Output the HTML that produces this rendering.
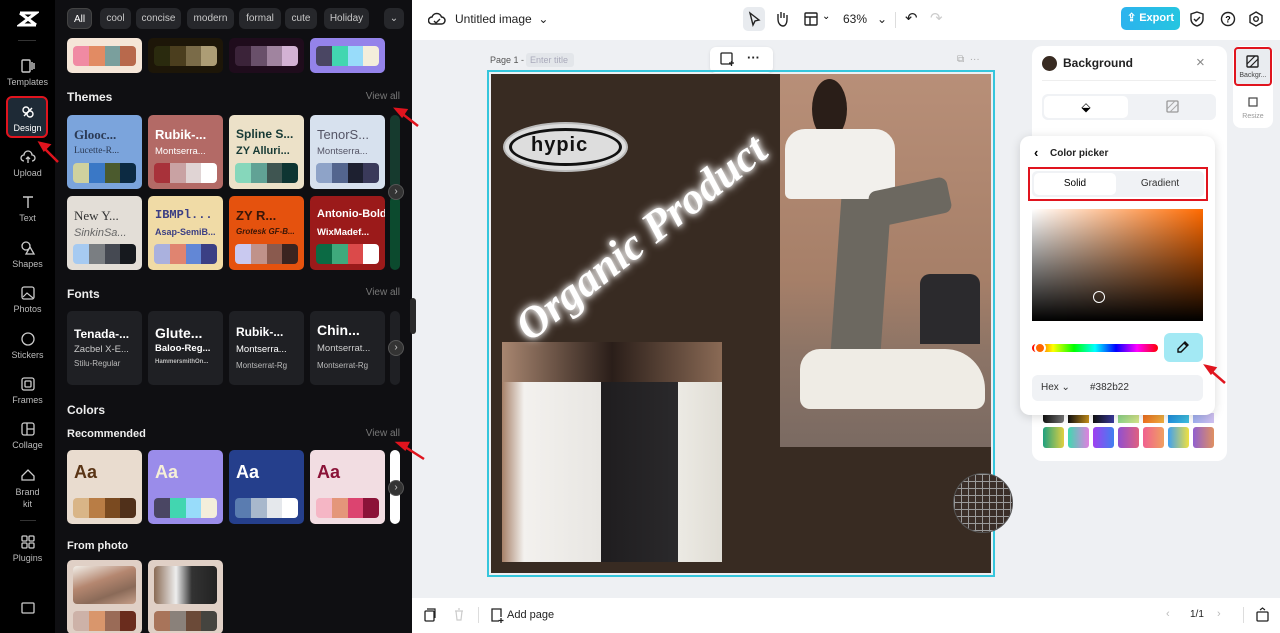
<!DOCTYPE html>
<html><head><meta charset="utf-8"><style>
*{box-sizing:border-box;margin:0;padding:0}
body{width:1280px;height:633px;overflow:hidden;font-family:"Liberation Sans",sans-serif;background:#eef0f3;position:relative}
.a{position:absolute}
.rail{left:0;top:0;width:55px;height:633px;background:#000}
.ri{position:absolute;left:0;width:55px;text-align:center;color:#bbb;font-size:9px}
.ri svg{display:block;margin:0 auto 3px}
.panel{left:55px;top:0;width:357px;height:633px;background:#0f0f12;color:#fff;overflow:hidden}
.chip{position:absolute;top:8px;height:21px;border-radius:6px;background:#26272b;color:#c8c8c8;font-size:10px;line-height:21px;text-align:center}
.h{position:absolute;font-size:12px;font-weight:bold;color:#eee}
.va{position:absolute;right:12px;font-size:10px;color:#777}
.card{position:absolute;width:75px;height:74px;border-radius:5px;overflow:hidden}
.sw{position:absolute;left:6px;right:6px;bottom:6px;height:20px;border-radius:4px;overflow:hidden;display:flex}
.sw i{flex:1}
.t1{position:absolute;left:7px;top:12px;font-size:13px;font-weight:bold;white-space:nowrap}
.t2{position:absolute;left:7px;top:31px;font-size:9.5px;white-space:nowrap}
.t3{position:absolute;left:7px;top:46px;font-size:8px;white-space:nowrap;color:#bbb}
.arr{position:absolute;width:16px;height:16px;border-radius:50%;background:#333;border:1px solid #555;color:#ccc;font-size:10px;line-height:14px;text-align:center}
.top{left:412px;top:0;width:868px;height:40px;background:#fff}
.bot{left:412px;top:598px;width:868px;height:35px;background:#fff}
.red{position:absolute;border:2px solid #e0141e}
</style></head><body>
<div class="a rail">
 <div class="ri" style="top:10px"><svg width="22" height="18" viewBox="0 0 22 18"><path d="M3 3h16L3 15h16M3 3l16 12" stroke="#fff" stroke-width="3" fill="none"/></svg></div>
 <div style="position:absolute;left:18px;top:40px;width:18px;height:1px;background:#333"></div>
 <div class="ri" style="top:58px"><svg width="16" height="16"><rect x="2" y="2" width="8" height="12" rx="1" fill="none" stroke="#ccc" stroke-width="1.4"/><path d="M12 4v8M14 5v6" stroke="#ccc" stroke-width="1.4"/></svg>Templates</div>
 <div style="position:absolute;left:6px;top:96px;width:42px;height:42px;border-radius:6px;background:#1e2a36;border:2px solid #e0141e"></div>
 <div class="ri" style="top:104px;color:#fff"><svg width="16" height="16"><circle cx="6" cy="6" r="3" fill="none" stroke="#fff" stroke-width="1.4"/><circle cx="10" cy="10" r="3" fill="none" stroke="#fff" stroke-width="1.4"/><path d="M4 12l8-8" stroke="#fff" stroke-width="1.4"/></svg>Design</div>
 <div class="ri" style="top:149px"><svg width="16" height="16"><path d="M4 12a3 3 0 010-6 4 4 0 018 0 3 3 0 010 6M8 8v6M6 10l2-2 2 2" fill="none" stroke="#ccc" stroke-width="1.3"/></svg>Upload</div>
 <div class="ri" style="top:194px"><svg width="16" height="16"><path d="M3 3h10M8 3v11" stroke="#ccc" stroke-width="1.4"/></svg>Text</div>
 <div class="ri" style="top:240px"><svg width="16" height="16"><circle cx="6" cy="6" r="4" fill="none" stroke="#ccc" stroke-width="1.3"/><path d="M10 7l4 7H6z" fill="none" stroke="#ccc" stroke-width="1.3"/></svg>Shapes</div>
 <div class="ri" style="top:285px"><svg width="16" height="16"><rect x="2" y="2" width="12" height="12" rx="2" fill="none" stroke="#ccc" stroke-width="1.3"/><path d="M3 12l4-4 6 5" fill="none" stroke="#ccc" stroke-width="1.2"/></svg>Photos</div>
 <div class="ri" style="top:331px"><svg width="16" height="16"><circle cx="8" cy="8" r="6" fill="none" stroke="#ccc" stroke-width="1.3"/></svg>Stickers</div>
 <div class="ri" style="top:376px"><svg width="16" height="16"><rect x="2" y="2" width="12" height="12" rx="2" fill="none" stroke="#ccc" stroke-width="1.3"/><rect x="5" y="5" width="6" height="6" rx="1" fill="none" stroke="#ccc" stroke-width="1.3"/></svg>Frames</div>
 <div class="ri" style="top:421px"><svg width="16" height="16"><rect x="2" y="2" width="12" height="12" rx="2" fill="none" stroke="#ccc" stroke-width="1.3"/><path d="M7 2v12M7 8h7" stroke="#ccc" stroke-width="1.3"/></svg>Collage</div>
 <div class="ri" style="top:467px;line-height:12px"><svg width="16" height="16"><path d="M2 13h12V9L8 3 2 9z" fill="none" stroke="#ccc" stroke-width="1.3"/></svg>Brand<br>kit</div>
 <div style="position:absolute;left:20px;top:520px;width:16px;height:1px;background:#333"></div>
 <div class="ri" style="top:534px"><svg width="16" height="16"><rect x="2" y="2" width="5" height="5" rx="1" fill="none" stroke="#ccc" stroke-width="1.3"/><rect x="9" y="2" width="5" height="5" rx="1" fill="none" stroke="#ccc" stroke-width="1.3"/><rect x="2" y="9" width="5" height="5" rx="1" fill="none" stroke="#ccc" stroke-width="1.3"/><rect x="9" y="9" width="5" height="5" rx="1" fill="none" stroke="#ccc" stroke-width="1.3"/></svg>Plugins</div>
 <div class="ri" style="top:601px"><svg width="16" height="14"><rect x="2" y="2" width="12" height="10" rx="1" fill="none" stroke="#ccc" stroke-width="1.3"/></svg></div>
</div>
<div class="a panel">
 <div class="chip" style="left:12px;width:25px;background:#2e2f33;border:1px solid #444;color:#fff">All</div>
 <div class="chip" style="left:45px;width:31px">cool</div>
 <div class="chip" style="left:81px;width:45px">concise</div>
 <div class="chip" style="left:132px;width:47px">modern</div>
 <div class="chip" style="left:184px;width:42px">formal</div>
 <div class="chip" style="left:230px;width:32px">cute</div>
 <div class="chip" style="left:269px;width:45px">Holiday</div>
 <div class="chip" style="left:329px;width:20px">⌄</div>
 <div class="card" style="left:12px;top:38px;height:35px;background:#f5e6d8"><div class="sw" style="top:8px;height:20px"><i style="background:#f08aa3"></i><i style="background:#e28b63"></i><i style="background:#7a9f9d"></i><i style="background:#b8694c"></i></div></div>
 <div class="card" style="left:93px;top:38px;height:35px;background:#1d1608"><div class="sw" style="top:8px;height:20px"><i style="background:#2a2a0e"></i><i style="background:#4b3e1e"></i><i style="background:#7a6b48"></i><i style="background:#ad9d75"></i></div></div>
 <div class="card" style="left:174px;top:38px;height:35px;background:#1f0c1c"><div class="sw" style="top:8px;height:20px"><i style="background:#3b2339"></i><i style="background:#69506a"></i><i style="background:#a0849f"></i><i style="background:#d3b2d4"></i></div></div>
 <div class="card" style="left:255px;top:38px;height:35px;background:#9483ea"><div class="sw" style="top:8px;height:20px"><i style="background:#4a4663"></i><i style="background:#42d6b0"></i><i style="background:#98dcfa"></i><i style="background:#f4eedb"></i></div></div>
 <div class="h" style="left:12px;top:90px">Themes</div><div class="va" style="top:91px">View all</div>
 <div class="card" style="left:12px;top:115px;background:#7ba4dc;color:#2b3a55"><div class="t1" style="font-family:'Liberation Serif',serif">Glooc...</div><div class="t2" style="font-family:'Liberation Serif',serif">Lucette-R...</div><div class="sw"><i style="background:#cfd19e"></i><i style="background:#3a78c6"></i><i style="background:#4b5a2d"></i><i style="background:#0c2a42"></i></div></div>
 <div class="card" style="left:93px;top:115px;background:#b36a66;color:#fff"><div class="t1">Rubik-...</div><div class="t2">Montserra...</div><div class="sw"><i style="background:#a8323a"></i><i style="background:#c9a2a3"></i><i style="background:#e0d4d4"></i><i style="background:#fff"></i></div></div>
 <div class="card" style="left:174px;top:115px;background:#ece1c8;color:#173a35"><div class="t1" style="font-size:12px">Spline S...</div><div class="t2" style="font-size:11px;font-weight:bold;top:30px">ZY Alluri...</div><div class="sw"><i style="background:#86d7bb"></i><i style="background:#61a295"></i><i style="background:#3f5551"></i><i style="background:#0e3532"></i></div></div>
 <div class="card" style="left:255px;top:115px;background:#d7e1ee;color:#556"><div class="t1" style="font-weight:normal">TenorS...</div><div class="t2">Montserra...</div><div class="sw"><i style="background:#8ea3c8"></i><i style="background:#53658e"></i><i style="background:#1d2030"></i><i style="background:#3a3a5a"></i></div></div>
 <div class="card" style="left:335px;top:115px;width:10px;background:#163a2e"></div>
 <div class="card" style="left:12px;top:196px;background:#e3ded7;color:#333"><div class="t1" style="font-family:'Liberation Serif',serif;font-weight:normal">New Y...</div><div class="t2" style="font-style:italic;font-size:11px;color:#666">SinkinSa...</div><div class="sw"><i style="background:#a6caf1"></i><i style="background:#7a7e82"></i><i style="background:#454952"></i><i style="background:#16191e"></i></div></div>
 <div class="card" style="left:93px;top:196px;background:#f0dba6;color:#3b3f84"><div class="t1" style="font-family:'Liberation Mono',monospace;font-size:12px">IBMPl...</div><div class="t2" style="font-weight:bold;font-size:9px">Asap-SemiB...</div><div class="sw"><i style="background:#aab1de"></i><i style="background:#e08470"></i><i style="background:#6287d6"></i><i style="background:#3b3f84"></i></div></div>
 <div class="card" style="left:174px;top:196px;background:#e5520e;color:#3a1608"><div class="t1">ZY R...</div><div class="t2" style="font-style:italic;font-weight:bold;font-size:8px">Grotesk GF-B...</div><div class="sw"><i style="background:#c9c9f0"></i><i style="background:#c0928a"></i><i style="background:#8a5a4e"></i><i style="background:#3a2420"></i></div></div>
 <div class="card" style="left:255px;top:196px;background:#9b1a1a;color:#fff"><div class="t1" style="font-size:11px">Antonio-Bold</div><div class="t2" style="font-weight:bold">WixMadef...</div><div class="sw"><i style="background:#0b6a44"></i><i style="background:#3fa97c"></i><i style="background:#db4a4a"></i><i style="background:#fff"></i></div></div>
 <div class="card" style="left:335px;top:196px;width:10px;background:#0c4a2e"></div>
 <div class="arr" style="left:333px;top:184px">›</div>
 <div class="h" style="left:12px;top:287px">Fonts</div><div class="va" style="top:287px">View all</div>
 <div class="card" style="left:12px;top:311px;background:#1f2024"><div class="t1" style="top:16px;font-size:12px">Tenada-...</div><div class="t2" style="top:33px;color:#ccc">Zacbel X-E...</div><div class="t3" style="top:48px">Stilu-Regular</div></div>
 <div class="card" style="left:93px;top:311px;background:#1f2024"><div class="t1" style="top:14px;font-size:14px">Glute...</div><div class="t2" style="top:32px;font-weight:bold">Baloo-Reg...</div><div class="t3" style="top:48px;font-size:6px;font-weight:bold">HammersmithOn...</div></div>
 <div class="card" style="left:174px;top:311px;background:#1f2024"><div class="t1" style="top:14px;font-size:12px">Rubik-...</div><div class="t2" style="top:33px">Montserra...</div><div class="t3" style="top:50px">Montserrat-Rg</div></div>
 <div class="card" style="left:255px;top:311px;background:#1f2024"><div class="t1" style="top:11px;font-size:14px">Chin...</div><div class="t2" style="top:32px;color:#ccc">Montserrat...</div><div class="t3" style="top:50px">Montserrat-Rg</div></div>
 <div class="card" style="left:335px;top:311px;width:10px;background:#1f2024"></div>
 <div class="arr" style="left:333px;top:340px">›</div>
 <div class="h" style="left:12px;top:403px">Colors</div>
 <div class="h" style="left:12px;top:428px;font-size:11px">Recommended</div><div class="va" style="top:428px">View all</div>
 <div class="card" style="left:12px;top:450px;background:#e9dccf;color:#5a3516"><div class="t1" style="font-size:18px;top:12px">Aa</div><div class="sw"><i style="background:#d9b587"></i><i style="background:#b97d45"></i><i style="background:#7a4a20"></i><i style="background:#50301a"></i></div></div>
 <div class="card" style="left:93px;top:450px;background:#9a8cea;color:#f6f0d8"><div class="t1" style="font-size:18px;top:12px">Aa</div><div class="sw"><i style="background:#4a4663"></i><i style="background:#42d6b0"></i><i style="background:#98dcfa"></i><i style="background:#f4eedb"></i></div></div>
 <div class="card" style="left:174px;top:450px;background:#253f8c;color:#fff"><div class="t1" style="font-size:18px;top:12px">Aa</div><div class="sw"><i style="background:#5a7cb0"></i><i style="background:#a8b8cc"></i><i style="background:#e5e8ec"></i><i style="background:#fff"></i></div></div>
 <div class="card" style="left:255px;top:450px;background:#f2dde2;color:#8b1338"><div class="t1" style="font-size:18px;top:12px">Aa</div><div class="sw"><i style="background:#f5b6c5"></i><i style="background:#e4967a"></i><i style="background:#dc4470"></i><i style="background:#8b1338"></i></div></div>
 <div class="card" style="left:335px;top:450px;width:10px;background:#fff"></div>
 <div class="arr" style="left:333px;top:480px">›</div>
 <div class="h" style="left:12px;top:540px;font-size:11px">From photo</div>
 <div class="card" style="left:12px;top:560px;background:#e0d0c6"><div style="position:absolute;left:6px;top:6px;right:6px;height:38px;border-radius:4px;background:linear-gradient(160deg,#f2efe9 0%,#b58770 40%,#8a6a58 70%,#c7a08a 100%)"></div><div class="sw" style="bottom:3px"><i style="background:#cdb2a8"></i><i style="background:#d9966c"></i><i style="background:#9a6b57"></i><i style="background:#6a2c1d"></i></div></div>
 <div class="card" style="left:93px;top:560px;background:#e0d0c6"><div style="position:absolute;left:6px;top:6px;right:6px;height:38px;border-radius:4px;background:linear-gradient(90deg,#8a6b55 0%,#eee 35%,#333 60%,#222 100%)"></div><div class="sw" style="bottom:3px"><i style="background:#a8745a"></i><i style="background:#8a817a"></i><i style="background:#6b4a38"></i><i style="background:#45443f"></i></div></div>
</div>
<div class="a" style="left:410px;top:298px;width:6px;height:36px;background:#2a2a2a;border-radius:3px"></div>
<div class="a top">
 <svg class="a" style="left:16px;top:11px" width="18" height="16"><path d="M4 13a3.5 3.5 0 010-7 5 5 0 019.5 0 3.5 3.5 0 010 7z" fill="none" stroke="#222" stroke-width="1.5"/><path d="M6 10l2 2 4-4" fill="none" stroke="#222" stroke-width="1.4"/></svg>
 <div class="a" style="left:43px;top:12px;font-size:12px;color:#222">Untitled image &nbsp;⌄</div>
 <div class="a" style="left:331px;top:7px;width:22px;height:24px;border-radius:5px;background:#e8ebef"></div>
 <svg class="a" style="left:335px;top:11px" width="14" height="16"><path d="M3 2l9 7-4 1-2 4z" fill="none" stroke="#222" stroke-width="1.4"/></svg>
 <svg class="a" style="left:362px;top:10px" width="16" height="18"><path d="M4 9V4M7 8V2M10 8V3M13 9V5M4 9c0 5 3 7 5 7s4-2 4-7" fill="none" stroke="#222" stroke-width="1.4"/></svg>
 <svg class="a" style="left:392px;top:12px" width="14" height="14"><rect x="1" y="1" width="12" height="12" rx="1" fill="none" stroke="#222" stroke-width="1.4"/><path d="M1 5h12M6 5v8" stroke="#222" stroke-width="1.4"/></svg>
 <div class="a" style="left:410px;top:11px;font-size:10px">⌄</div>
 <div class="a" style="left:431px;top:12px;font-size:12px;color:#222">63% &nbsp; ⌄</div>
 <div class="a" style="left:483px;top:12px;width:1px;height:16px;background:#ddd"></div>
 <div class="a" style="left:493px;top:9px;font-size:15px;color:#222">↶</div>
 <div class="a" style="left:518px;top:9px;font-size:15px;color:#ccc">↷</div>
 <div class="a" style="left:709px;top:7px;width:59px;height:23px;border-radius:5px;background:linear-gradient(90deg,#2cb3ee,#25c5e0);color:#fff;font-size:11px;font-weight:bold;line-height:23px;text-align:center">⇪ Export</div>
 <svg class="a" style="left:778px;top:11px" width="14" height="16"><path d="M7 1l6 2v5c0 4-3 6-6 7-3-1-6-3-6-7V3z M4 8l2 2 4-4" fill="none" stroke="#222" stroke-width="1.4"/></svg>
 <svg class="a" style="left:808px;top:11px" width="16" height="16"><circle cx="8" cy="8" r="6.5" fill="none" stroke="#222" stroke-width="1.4"/><text x="5.3" y="11.5" font-size="9" font-weight="bold" font-family="Liberation Sans">?</text></svg>
 <svg class="a" style="left:836px;top:11px" width="16" height="16"><path d="M8 1l6 3.5v7L8 15l-6-3.5v-7z" fill="none" stroke="#222" stroke-width="1.4"/><circle cx="8" cy="8" r="2.3" fill="none" stroke="#222" stroke-width="1.4"/></svg>
</div>
<div class="a" style="left:490px;top:55px;font-size:9px;color:#555">Page 1 -</div>
<div class="a" style="left:526px;top:53px;width:48px;height:14px;border-radius:3px;background:#e3e6ea;font-size:9px;color:#aab;line-height:14px;padding-left:4px">Enter title</div>
<div class="a" style="left:710px;top:47px;width:63px;height:26px;border-radius:6px;background:#fff;box-shadow:0 1px 3px rgba(0,0,0,.1)"></div>
<svg class="a" style="left:720px;top:52px" width="14" height="15"><rect x="1" y="1" width="11" height="11" rx="1" fill="none" stroke="#222" stroke-width="1.3"/><path d="M9 11h5M11.5 9v5" stroke="#222" stroke-width="1.3"/></svg>
<div class="a" style="left:747px;top:50px;font-size:13px;font-weight:bold;color:#222">···</div>
<div class="a" style="left:957px;top:54px;font-size:10px;color:#aaa">⧉ &nbsp;···</div>
<div class="a" style="left:487px;top:70px;width:508px;height:507px;border:2px solid #35c6dc"></div>
<div class="a" style="left:491px;top:74px;width:500px;height:499px;background:#382b22;overflow:hidden">
 <div class="a" style="left:289px;top:0;width:211px;height:373px;background:linear-gradient(180deg,#b88f78 0%,#a67f68 55%,#8c7466 75%,#7a6a62 100%);overflow:hidden">
  <div class="a" style="left:32px;top:5px;width:35px;height:60px;border-radius:50%;background:#2a1e18"></div>
  <div class="a" style="left:5px;top:55px;width:110px;height:70px;border-radius:20px 20px 6px 6px;background:#f2f0ec"></div>
  <div class="a" style="left:55px;top:125px;width:50px;height:180px;background:#6c6860;transform:skewX(-4deg)"></div>
  <div class="a" style="left:90px;top:110px;width:80px;height:36px;background:#6c6860;border-radius:8px;transform:rotate(-12deg)"></div>
  <div class="a" style="left:140px;top:200px;width:60px;height:70px;background:#2b2a2d;border-radius:10px 10px 0 0"></div>
  <div class="a" style="left:20px;top:275px;width:185px;height:60px;background:#efece5;border-radius:20px 40px 10px 10px"></div>
 </div>
 <div class="a" style="left:11px;top:268px;width:220px;height:220px;background:linear-gradient(90deg,#a68068 0%,#f3f1ee 10%,#e8e6e2 45%,#1f1d1f 45%,#2a292b 80%,#eceae4 80%,#e0ddd5 100%)">
  <div class="a" style="left:0;top:0;width:220px;height:40px;background:linear-gradient(90deg,#a88670,#2a1e19 50%,#8a6a55)"></div>
 </div>
 <div class="a" style="left:12px;top:48px;width:125px;height:50px;border-radius:50%;background:#ddd;border:2px solid #bbb"></div>
 <div class="a" style="left:18px;top:54px;width:113px;height:38px;border-radius:50%;border:3px solid #111"></div>
 <div class="a" style="left:40px;top:60px;font-size:20px;font-weight:bold;color:#111;letter-spacing:1px">hypic</div>
 <div class="a" style="left:-20px;top:138px;width:340px;text-align:center;font-family:'Liberation Serif',serif;font-style:italic;font-weight:bold;font-size:44px;color:#fff;transform:rotate(-38deg);text-shadow:0 0 6px #fff,0 0 10px #fff">Organic Product</div>
</div>
<div class="a" style="left:953px;top:473px;width:60px;height:60px;border-radius:50%;background:#3a2e28;border:1px solid #555;background-image:linear-gradient(#9a9a9a 1px,transparent 1px),linear-gradient(90deg,#9a9a9a 1px,transparent 1px);background-size:7px 7px"></div>
<div class="a" style="left:1233px;top:46px;width:40px;height:82px;border-radius:8px;background:#fff"></div>
<div class="a" style="left:1234px;top:47px;width:38px;height:39px;border-radius:4px;background:#e9ecf0;border:2px solid #e0141e"></div>
<svg class="a" style="left:1246px;top:55px" width="13" height="13"><rect x="1" y="1" width="11" height="11" rx="1" fill="none" stroke="#222" stroke-width="1.4"/><path d="M1 9l8-8M4 12l8-8" stroke="#222" stroke-width="1.2"/></svg>
<div class="a" style="left:1236px;top:72px;width:34px;font-size:7px;color:#444;text-align:center">Backgr...</div>
<svg class="a" style="left:1247px;top:96px" width="12" height="12"><rect x="2" y="2" width="8" height="8" fill="none" stroke="#444" stroke-width="1.2"/></svg>
<div class="a" style="left:1236px;top:113px;width:34px;font-size:7px;color:#999;text-align:center">Resize</div>
<div class="a" style="left:1032px;top:46px;width:195px;height:415px;border-radius:10px;background:#fff"></div>
<div class="a" style="left:1042px;top:56px;width:15px;height:15px;border-radius:50%;background:#382b22"></div>
<div class="a" style="left:1063px;top:56px;font-size:12px;font-weight:bold;color:#222">Background</div>
<div class="a" style="left:1196px;top:54px;font-size:15px;color:#888">×</div>
<div class="a" style="left:1042px;top:80px;width:174px;height:1px;background:#eee"></div>
<div class="a" style="left:1042px;top:94px;width:174px;height:26px;border-radius:6px;background:#f0f2f5"></div>
<div class="a" style="left:1044px;top:96px;width:84px;height:22px;border-radius:5px;background:#fff;text-align:center;font-size:12px;line-height:22px">⬙</div>
<svg class="a" style="left:1166px;top:100px" width="13" height="13"><rect x="1" y="1" width="11" height="11" rx="1" fill="none" stroke="#999" stroke-width="1.3"/><path d="M1 9l8-8M4 12l8-8" stroke="#aaa" stroke-width="1"/></svg>
<div class="a" style="left:1043px;top:413px;display:grid;grid-template-columns:repeat(7,21px);gap:4px">
 <i style="height:10px;border-radius:0 0 3px 3px;background:linear-gradient(90deg,#111,#777)"></i><i style="height:10px;background:linear-gradient(90deg,#111,#c8901a)"></i><i style="height:10px;background:linear-gradient(90deg,#111,#3a3aa0)"></i><i style="height:10px;background:linear-gradient(90deg,#8ed68a,#d6e68a)"></i><i style="height:10px;background:linear-gradient(90deg,#f07020,#f0b040)"></i><i style="height:10px;background:linear-gradient(90deg,#2090e0,#40c0e0)"></i><i style="height:10px;background:linear-gradient(90deg,#a0b0f0,#d0c0f0)"></i>
 <i style="height:21px;border-radius:3px;background:linear-gradient(90deg,#20a080,#e0d040)"></i><i style="height:21px;border-radius:3px;background:linear-gradient(90deg,#40d8b0,#e080e0)"></i><i style="height:21px;border-radius:3px;background:linear-gradient(90deg,#a040f0,#4080f0)"></i><i style="height:21px;border-radius:3px;background:linear-gradient(90deg,#9050d0,#e06080)"></i><i style="height:21px;border-radius:3px;background:linear-gradient(90deg,#f06090,#f0a060)"></i><i style="height:21px;border-radius:3px;background:linear-gradient(90deg,#40a0f0,#f0e040)"></i><i style="height:21px;border-radius:3px;background:linear-gradient(90deg,#9060d0,#e09060)"></i>
</div>
<div class="a" style="left:1020px;top:136px;width:195px;height:279px;border-radius:10px;background:#fff;box-shadow:0 2px 10px rgba(0,0,0,.15)"></div>
<div class="a" style="left:1034px;top:145px;font-size:13px;font-weight:bold">‹</div>
<div class="a" style="left:1050px;top:148px;font-size:10px;font-weight:bold;color:#222">Color picker</div>
<div class="red" style="left:1028px;top:167px;width:180px;height:34px"></div>
<div class="a" style="left:1032px;top:171px;width:172px;height:26px;border-radius:5px;background:#f0f2f5"></div>
<div class="a" style="left:1034px;top:173px;width:82px;height:22px;border-radius:5px;background:#fff;text-align:center;font-size:10px;line-height:22px">Solid</div>
<div class="a" style="left:1118px;top:173px;width:84px;height:22px;text-align:center;font-size:10px;line-height:22px;color:#333">Gradient</div>
<div class="a" style="left:1032px;top:209px;width:171px;height:112px;background:linear-gradient(to bottom,transparent,#000),linear-gradient(to right,#fff,#ff6a00)"></div>
<div class="a" style="left:1093px;top:291px;width:12px;height:12px;border-radius:50%;border:1.5px solid #fff"></div>
<div class="a" style="left:1032px;top:344px;width:126px;height:8px;border-radius:4px;background:linear-gradient(90deg,#f00,#ff0,#0f0,#0ff,#00f,#f0f,#f00)"></div>
<div class="a" style="left:1034px;top:342px;width:12px;height:12px;border-radius:50%;background:#f60;border:2px solid #fff"></div>
<div class="a" style="left:1164px;top:333px;width:39px;height:29px;border-radius:6px;background:#a3e9f4"></div>
<svg class="a" style="left:1176px;top:340px" width="14" height="14"><path d="M9 2l3 3-7 7H2v-3z M8 3l3 3" fill="none" stroke="#111" stroke-width="1.4"/></svg>
<div class="a" style="left:1032px;top:375px;width:171px;height:26px;border-radius:6px;background:#f0f2f5;font-size:10px;line-height:26px;color:#333"><span style="margin-left:9px">Hex ⌄</span><span style="margin-left:20px">#382b22</span></div>
<div class="a bot">
 <svg class="a" style="left:12px;top:10px" width="12" height="14"><rect x="1" y="3" width="9" height="10" rx="1" fill="none" stroke="#222" stroke-width="1.3"/><path d="M3 1h8v9" fill="none" stroke="#222" stroke-width="1.2"/></svg>
 <svg class="a" style="left:42px;top:10px" width="10" height="13"><path d="M1 3h8M2 3l1 9h4l1-9M4 1h2" fill="none" stroke="#ccc" stroke-width="1.2"/></svg>
 <div class="a" style="left:66px;top:9px;width:1px;height:16px;background:#ddd"></div>
 <svg class="a" style="left:78px;top:10px" width="14" height="15"><path d="M9 13H2V1h9v8M11 10v5M8.5 12.5h5" fill="none" stroke="#222" stroke-width="1.3"/></svg>
 <div class="a" style="left:95px;top:11px;font-size:11px;color:#222">Add page</div>
 <div class="a" style="left:754px;top:10px;font-size:11px;color:#bbb">‹</div>
 <div class="a" style="left:778px;top:11px;font-size:10px;color:#222">1/1</div>
 <div class="a" style="left:805px;top:10px;font-size:11px;color:#bbb">›</div>
 <div class="a" style="left:831px;top:9px;width:1px;height:16px;background:#ddd"></div>
 <svg class="a" style="left:844px;top:9px" width="13" height="15"><rect x="1" y="5" width="11" height="9" rx="1" fill="none" stroke="#222" stroke-width="1.3"/><path d="M4 3l2.5-2L9 3" fill="none" stroke="#222" stroke-width="1.2"/></svg>
</div>
<svg class="a" style="left:0;top:0" width="1280" height="633">
 <g stroke="#e0141e" stroke-width="2.5" fill="#e0141e">
  <path d="M58 162L42 146"/><path d="M40 143l9 2-5 5z"/>
  <path d="M418 126L400 112"/><path d="M396 109l10 1-4 6z"/>
  <path d="M424 459L402 445"/><path d="M398 443l10 0-3 6z"/>
  <path d="M1225 383L1210 370"/><path d="M1206 366l9 2-4 5z"/>
 </g>
</svg>
</body></html>
